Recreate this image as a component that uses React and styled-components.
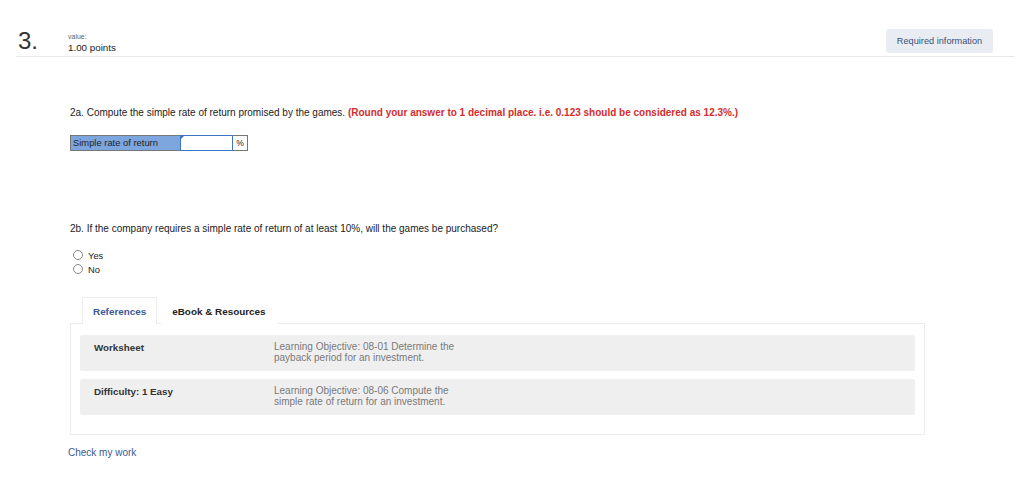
import styled, { createGlobalStyle } from "styled-components";

const GlobalStyle = createGlobalStyle`
    body {
        margin: 0;
        background: #fff;
        font-family: "Liberation Sans", Arial, sans-serif;
        color: #222;
    }
`;

const Page = styled.div`
    width: 1024px;
    height: 492px;
    overflow: hidden;
    box-sizing: border-box;
    padding: 0 9px 0 16px;
`;

const Header = styled.div`
    display: flex;
    align-items: flex-start;
    height: 57px;
    box-sizing: border-box;
    padding-top: 29px;
    border-bottom: 1px solid #e8e8e8;
`;

const Number = styled.div`
    font-size: 24px;
    line-height: 24px;
    width: 50px;
    padding-left: 2px;
    color: #333;
`;

const Points = styled.div`
    display: flex;
    flex-direction: column;
    margin-top: 3px;
`;

const ValueLabel = styled.span`
    font-size: 7px;
    color: #666;
    line-height: 9px;
`;

const PointsText = styled.span`
    font-size: 9.8px;
    line-height: 14px;
`;

const RequiredBtn = styled.div`
    margin-left: auto;
    margin-right: 22px;
    width: 107px;
    height: 24px;
    border-radius: 3px;
    background: #e9edf3;
    color: #3b4f78;
    font-size: 9.2px;
    display: flex;
    align-items: center;
    justify-content: center;
`;

const Body = styled.div`
    padding-left: 54px;
`;

const Question = styled.p`
    margin: ${(p) => p.$top}px 0 0 0;
    font-size: 10px;
    line-height: 12px;
    color: #222;
`;

const Hint = styled.span`
    color: #d42d2d;
    font-weight: bold;
`;

const InputRow = styled.div`
    display: flex;
    margin-top: 16px;
    height: 16px;
`;

const InputLabel = styled.div`
    width: 110px;
    background: #7ea6de;
    border: 1px solid #777;
    border-right: none;
    font-size: 9.4px;
    line-height: 14px;
    padding-left: 2px;
    box-sizing: border-box;
`;

const AnswerBox = styled.div`
    position: relative;
    width: 53px;
    border: 1px solid #3f74c4;
    box-sizing: border-box;
    background: #fff;
    &::before {
        content: "";
        position: absolute;
        left: 0;
        top: 0;
        border-left: 3px solid #3f74c4;
        border-bottom: 3px solid transparent;
    }
`;

const Unit = styled.div`
    width: 15px;
    border: 1px solid #777;
    border-left: none;
    box-sizing: border-box;
    font-size: 8.5px;
    line-height: 14px;
    text-align: center;
`;

const Options = styled.div`
    display: flex;
    flex-direction: column;
    gap: 2px;
    margin-top: 14px;
    padding-left: 3px;
`;

const Option = styled.label`
    display: flex;
    align-items: center;
    gap: 5px;
    font-size: 9.4px;
    height: 12px;
`;

const Radio = styled.span`
    width: 8px;
    height: 8px;
    border: 1px solid #888;
    border-radius: 50%;
    background: #fff;
`;

const Tabs = styled.div`
    display: flex;
    margin-top: 22px;
    padding-left: 12px;
`;

const Tab = styled.div`
    height: 27px;
    box-sizing: border-box;
    padding: 0 10px;
    display: flex;
    align-items: center;
    font-size: 9.9px;
    font-weight: bold;
    color: ${(p) => (p.$active ? "#3b5a94" : "#222")};
    border: 1px solid ${(p) => (p.$active ? "#ececec" : "transparent")};
    border-bottom: none;
    background: #fff;
    position: relative;
    z-index: 1;
    margin-bottom: -1px;
    margin-right: 4px;
`;

const Panel = styled.div`
    width: 855px;
    border: 1px solid #ededed;
    box-sizing: border-box;
    padding: 11px 9px 19px 9px;
    display: flex;
    flex-direction: column;
    gap: 8px;
`;

const RefRow = styled.div`
    display: flex;
    height: 36px;
    box-sizing: border-box;
    background: #efefef;
    border-radius: 2px;
    padding: 7px 14px;
`;

const RefTitle = styled.div`
    width: 180px;
    font-size: 9.8px;
    font-weight: bold;
    color: #333;
    line-height: 11px;
`;

const RefText = styled.div`
    width: 192px;
    font-size: 10px;
    color: #7a7a7a;
    line-height: 10.5px;
`;

const CheckLink = styled.a`
    display: inline-block;
    margin-top: 12px;
    margin-left: -2px;
    font-size: 10px;
    color: #3b5a94;
    text-decoration: none;
`;

function App() {
    const refs = [
        {
            title: "Worksheet",
            text: "Learning Objective: 08-01 Determine the payback period for an investment.",
        },
        {
            title: "Difficulty: 1 Easy",
            text: "Learning Objective: 08-06 Compute the simple rate of return for an investment.",
        },
    ];

    return (
        <>
            <GlobalStyle />
            <Page>
                <Header>
                    <Number>3.</Number>
                    <Points>
                        <ValueLabel>value:</ValueLabel>
                        <PointsText>1.00 points</PointsText>
                    </Points>
                    <RequiredBtn>Required information</RequiredBtn>
                </Header>
                <Body>
                    <Question $top={50}>
                        2a. Compute the simple rate of return promised by the games.{" "}
                        <Hint>
                            (Round your answer to 1 decimal place. i.e. 0.123 should be considered as 12.3%.)
                        </Hint>
                    </Question>
                    <InputRow>
                        <InputLabel>Simple rate of return</InputLabel>
                        <AnswerBox />
                        <Unit>%</Unit>
                    </InputRow>
                    <Question $top={72}>
                        2b. If the company requires a simple rate of return of at least 10%, will the games be purchased?
                    </Question>
                    <Options>
                        <Option>
                            <Radio />
                            Yes
                        </Option>
                        <Option>
                            <Radio />
                            No
                        </Option>
                    </Options>
                    <Tabs>
                        <Tab $active>References</Tab>
                        <Tab>eBook &amp; Resources</Tab>
                    </Tabs>
                    <Panel>
                        {refs.map((r) => (
                            <RefRow key={r.title}>
                                <RefTitle>{r.title}</RefTitle>
                                <RefText>{r.text}</RefText>
                            </RefRow>
                        ))}
                    </Panel>
                    <CheckLink href="#">Check my work</CheckLink>
                </Body>
            </Page>
        </>
    );
}

export default App;
